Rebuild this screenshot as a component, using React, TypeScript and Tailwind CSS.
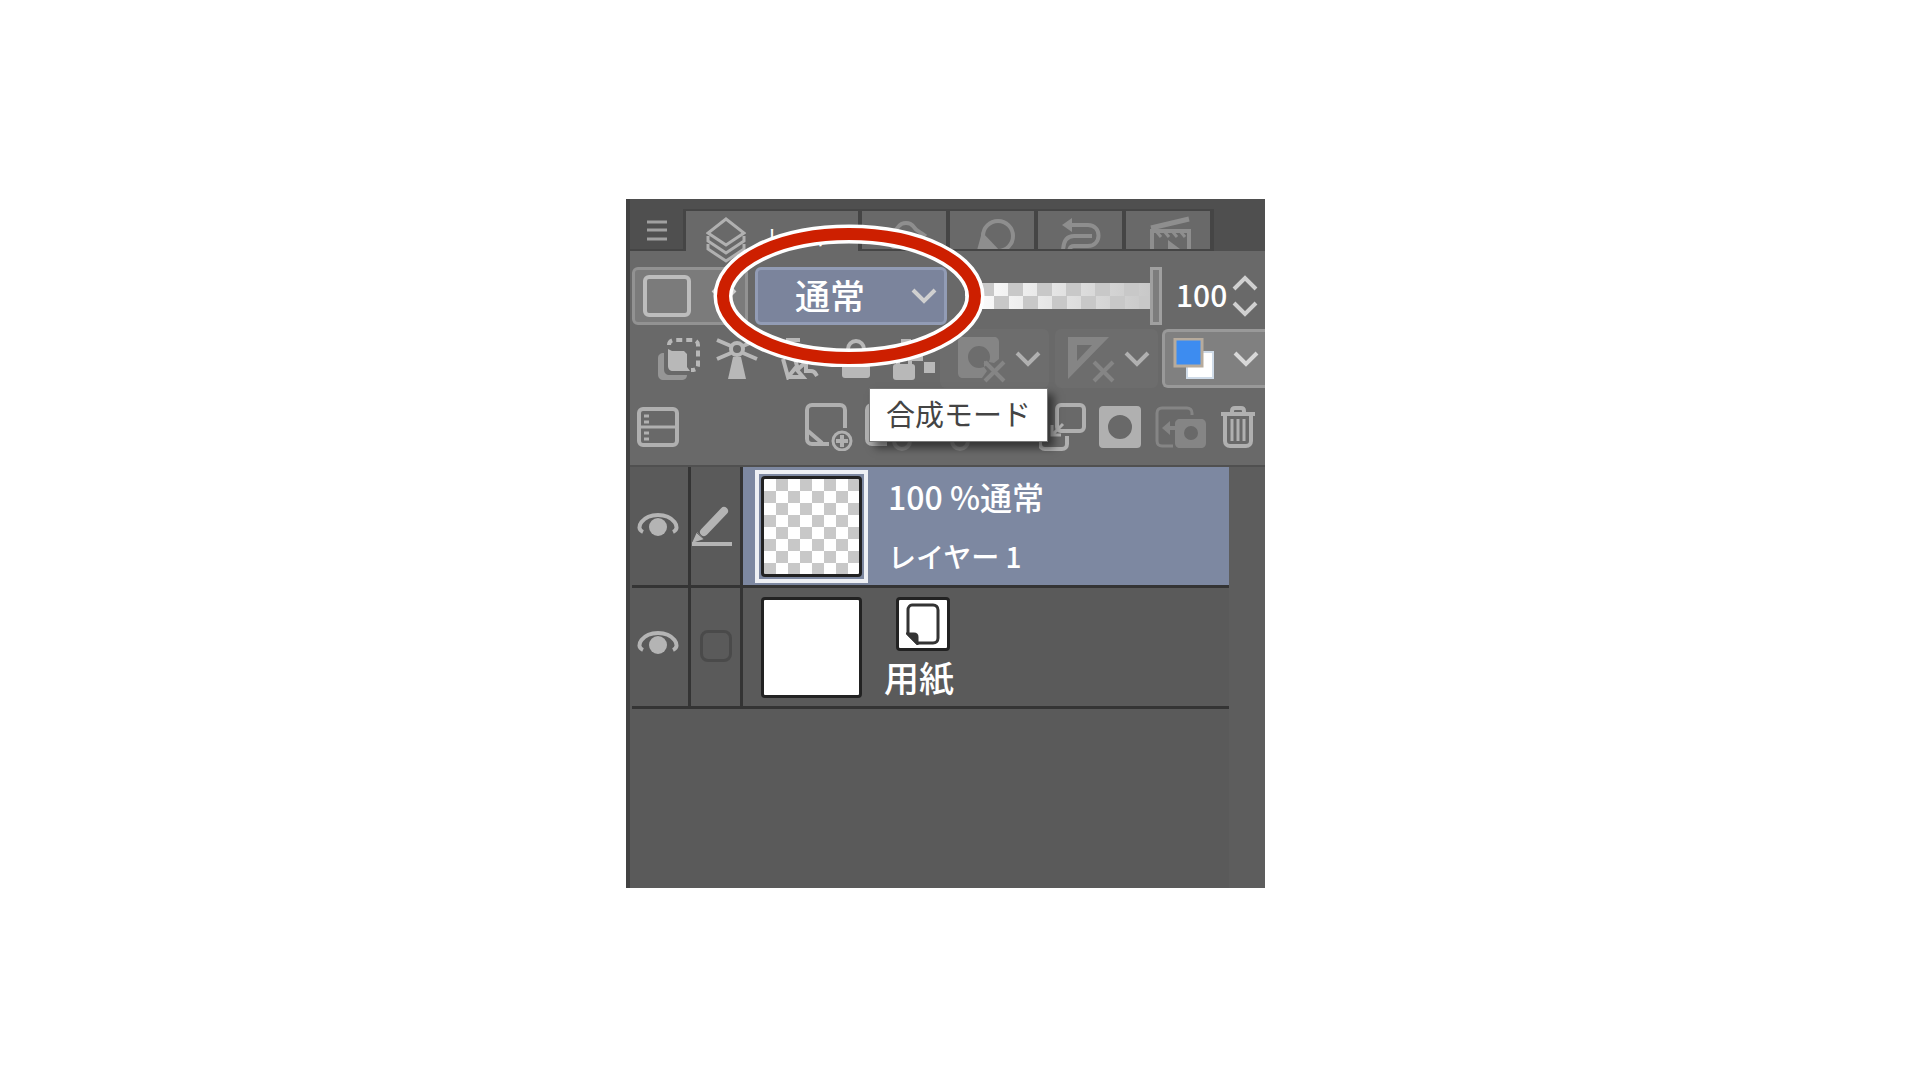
import { useState, type ReactNode } from "react";

const checker =
  "bg-[conic-gradient(#c8c8c8_25%,#fff_0_50%,#c8c8c8_0_75%,#fff_0)]";

function Chevron({ up = false }: { up?: boolean }) {
  return (
    <svg width="26" height="16" viewBox="0 0 26 16" fill="none" stroke="currentColor" strokeWidth="4" aria-hidden="true">
      <path d={up ? "M2 14 13 3l11 11" : "M2 2l11 11L24 2"} />
    </svg>
  );
}

function Icon({ w, h = 42, children }: { w: number; h?: number; children: ReactNode }) {
  return (
    <svg width={w} height={h} viewBox={`0 0 ${w} ${h}`} fill="none" stroke="currentColor" strokeWidth="4" className="block shrink-0" aria-hidden="true">
      {children}
    </svg>
  );
}

function Tab({ label, children }: { label: string; children: ReactNode }) {
  return (
    <button role="tab" aria-selected="false" aria-label={label} className="flex h-[42px] w-22 items-start justify-center overflow-hidden border-t-2 border-r-4 border-b-2 border-[#454545] bg-[#696969] pl-1 text-[#8e8e8e]">
      {children}
    </button>
  );
}

function Eye() {
  return (
    <svg width="42" height="26" viewBox="0 0 42 26" fill="none" aria-hidden="true">
      <path d="M6 20C-3 16 6 3 21 3s24 13 15 17" stroke="#b4b4b4" strokeWidth="4" />
      <circle cx="21" cy="15" r="9" fill="#b4b4b4" />
    </svg>
  );
}

function Tabs() {
  return (
    <div role="tablist" className="flex h-13 items-end bg-[#4f4f4f]">
      <button aria-label="メニュー" className="flex h-[42px] w-14 items-start justify-center border-r-3 border-b-2 border-[#454545] pt-2.5 text-[#a0a0a0]">
        <Icon w={22} h={24}>
          <path d="M1 3h20M1 11h20M1 20h20" strokeWidth="3" />
        </Icon>
      </button>
      <button role="tab" aria-selected="true" className="flex h-[42px] w-44 items-start border-t-2 border-r-4 border-[#454545] bg-[#696969] pt-1.5 pl-5 text-white">
        <span className="text-[#b0b0b0]">
          <Icon w={40} h={46}>
            <path d="M20 2 38 16 20 28 2 16zM2 19v5l18 12 18-12v-5M2 27v5l18 12 18-12v-5" strokeWidth="3" />
          </Icon>
        </span>
        <span className="ml-5 text-[22px] leading-9 whitespace-nowrap">レイヤー</span>
      </button>
      <Tab label="検索">
        <Icon w={42} h={46}>
          <path d="M3 24c4-3 8-4 11-9 3-4 11-4 14 0 3 5 7 6 11 9L21 38zM3 32l18 13 18-13" />
        </Icon>
      </Tab>
      <Tab label="プロパティ">
        <Icon w={42} h={46}>
          <circle cx="25" cy="25" r="15" />
          <path d="M9 21 30 43H3z" fill="currentColor" stroke="none" />
        </Icon>
      </Tab>
      <Tab label="ヒストリー">
        <Icon w={44} h={46}>
          <path d="M6 14h22c14 0 14 21 0 21H14c-4 0-5 3-5 7M32 25H14C7 25 3 30 3 41" />
          <path d="M12 7v14L2 14z" fill="currentColor" stroke="none" />
        </Icon>
      </Tab>
      <Tab label="オートアクション">
        <Icon w={44} h={46}>
          <path d="M3 17 41 8" strokeWidth="5" />
          <path d="M4 41V20h37v21" />
          <path d="m8 20 5 6m3-6 5 6m3-6 5 6m3-6 5 6" strokeWidth="3" />
          <path d="M20 29v14l12-5z" fill="currentColor" stroke="none" />
        </Icon>
      </Tab>
    </div>
  );
}

function BlendRow() {
  const [opacity, setOpacity] = useState(100);

  return (
    <div className="flex items-center pt-4 pr-[7px] pb-1 pl-0.5 text-[#d0d0d0]">
      <button aria-label="パレットカラー" className="mr-[7px] flex h-[58px] w-29 items-center justify-between rounded-md border-3 border-[#929292] bg-[#7b7b7b] pr-2 pl-2">
        <span className="h-[42px] w-12 rounded-md border-4 border-[#bdbdbd]" />
        <Chevron />
      </button>
      <div className="grid h-[58px] w-48 items-center">
        <select aria-label="合成モード" className="col-start-1 row-start-1 h-full w-full appearance-none rounded-md border-3 border-[#929cb5] bg-[#7b849c] pb-1 pl-[37px] text-[35px] leading-none font-medium text-white">
          <option>通常</option>
        </select>
        <span className="pointer-events-none col-start-1 row-start-1 mr-2.5 justify-self-end">
          <Chevron />
        </span>
      </div>
      <div className="ml-[18px] grid flex-1 items-center">
        <div className={`${checker} col-start-1 row-start-1 mr-3 h-[26px] bg-size-[29px_26px]`}>
          <div className="h-full bg-linear-to-r from-transparent to-[#c8c8c8]" />
        </div>
        <input
          type="range"
          aria-label="不透明度"
          value={opacity}
          onChange={(e) => setOpacity(Number(e.target.value))}
          className="col-start-1 row-start-1 h-[58px] w-full appearance-none bg-transparent [&::-webkit-slider-thumb]:h-[58px] [&::-webkit-slider-thumb]:w-3 [&::-webkit-slider-thumb]:appearance-none [&::-webkit-slider-thumb]:border-3 [&::-webkit-slider-thumb]:border-[#a0a0a0] [&::-webkit-slider-thumb]:bg-[#7d7d7d]"
        />
      </div>
      <input
        aria-label="不透明度の値"
        value={opacity}
        onChange={(e) => setOpacity(Number(e.target.value) || 0)}
        className="ml-3.5 w-14 bg-transparent pb-1 text-[30px] leading-none font-medium text-white"
      />
      <div className="flex flex-col gap-2.5">
        <button aria-label="増やす"><Chevron up /></button>
        <button aria-label="減らす"><Chevron /></button>
      </div>
    </div>
  );
}

function LockRow() {
  return (
    <div className="flex h-[59px] items-center text-[#b8b8b8]">
      <button aria-label="下のレイヤーでクリッピング" className="ml-7">
        <Icon w={42}>
          <path d="M6 15c-4 0-6 2-6 5v16c0 4 2 6 6 6h17c4 0 6-2 6-5H12c-4 0-6-2-6-6z" fill="#969696" stroke="none" />
          <path d="M10 11l4 2h12l3 3v13l3 4H15c-3 0-5-2-5-5z" fill="currentColor" stroke="none" />
          <path d="M11 7c0-3 2-5 5-5h19c3 0 5 2 5 5v20c0 3-2 5-7 5" strokeDasharray="6 4" />
        </Icon>
      </button>
      <button aria-label="参照レイヤーに設定" className="ml-4">
        <Icon w={42}>
          <path d="m1 2 14 6M1 21l14-6M41 2 27 8M41 21l-14-6" />
          <circle cx="21" cy="11" r="6" />
          <path d="M17 19h8l5 22H12z" fill="currentColor" stroke="none" />
        </Icon>
      </button>
      <button aria-label="下描きレイヤーに設定" className="ml-5">
        <Icon w={42}>
          <path d="M8 2h14M5 21l5 18 9-11-2-7M10 39h15l-6-7 9-8v9h5c4 0 4 2 6 5" />
        </Icon>
      </button>
      <button aria-label="レイヤーをロック" className="ml-5">
        <Icon w={32}>
          <path d="M8 20v-9a8 8 0 0 1 16 0v9" />
          <rect x="2" y="18" width="28" height="22" rx="3" fill="currentColor" stroke="none" />
        </Icon>
      </button>
      <button aria-label="透明ピクセルをロック" className="ml-5">
        <Icon w={44}>
          <path d="M9 1h10v10H9zM20 13h11v10H20zM32 24h11v11H32z" fill="currentColor" stroke="none" />
          <path d="M6 28v-6a6 6 0 0 1 12 0v6" />
          <rect x="1" y="26" width="22" height="16" rx="3" fill="currentColor" stroke="none" />
        </Icon>
      </button>
      <button aria-label="マスクを有効化" className="ml-1 flex h-full flex-1 items-center justify-between rounded-md bg-[#6d6d6d] pr-2 pl-[18px] text-[#858585]">
        <Icon w={48} h={48}>
          <path fillRule="evenodd" d="M5 2h31c3 0 5 2 5 5v17l-5 4-10-2v6l3 4-5 7H5c-3 0-5-2-5-5V7c0-3 2-5 5-5zM21 11a11 11 0 1 0 0 22 11 11 0 0 0 0-22z" fill="currentColor" stroke="none" />
          <path d="m27 27 19 19M46 27 27 46" />
        </Icon>
        <span className="text-[#b0b0b0]"><Chevron /></span>
      </button>
      <button aria-label="定規の表示範囲を設定" className="ml-1.5 flex h-full flex-1 items-center justify-between rounded-md bg-[#6d6d6d] pr-2 pl-3 text-[#858585]">
        <Icon w={48} h={48}>
          <path fillRule="evenodd" d="M1 2h41L1 44zM10 10v16l15-16z" fill="currentColor" stroke="none" />
          <path d="m27 27 19 19M46 27 27 46" />
        </Icon>
        <span className="text-[#b0b0b0]"><Chevron /></span>
      </button>
      <button aria-label="レイヤーカラーを変更" className="ml-1 flex h-full w-[103px] items-center justify-between rounded-l-md border-3 border-r-0 border-[#999] bg-[#808080] pr-1.5 pl-2">
        <Icon w={42}>
          <rect x="14" y="14" width="26" height="26" fill="#fff" stroke="#cfdbe8" strokeWidth="2" />
          <rect x="2" y="1" width="27" height="27" fill="#3d8cf0" stroke="#b7ab9c" strokeWidth="3" />
        </Icon>
        <span className="text-[#d8d8d8]"><Chevron /></span>
      </button>
    </div>
  );
}

function CommandRow() {
  return (
    <div className="flex h-[77px] items-center pr-[10px] pl-[7px] text-[#b0b0b0]">
      <button aria-label="レイヤーを2ペインで表示">
        <Icon w={42}>
          <rect x="2" y="3" width="38" height="36" rx="4" />
          <path d="M2 21h38M7 10h5M7 16h5M7 27h5M7 33h5" strokeWidth="3" />
        </Icon>
      </button>
      <div className="ml-auto flex items-center">
        <button aria-label="新規ラスターレイヤー">
          <Icon w={48} h={48}>
            <path d="M40 25V7c0-3-2-5-5-5H7C4 2 2 4 2 7v29c0 3 2 5 5 5h17M3 28l14 12" />
            <circle cx="37" cy="38" r="9" strokeWidth="3" />
            <path d="M37 32v12M31 38h12" />
          </Icon>
        </button>
        <button aria-label="新規ベクターレイヤー" className="ml-3">
          <Icon w={48} h={48}>
            <path d="M40 25V7c0-3-2-5-5-5H7C4 2 2 4 2 7v29c0 3 2 5 5 5h15" />
            <circle cx="37" cy="38" r="8" stroke="#828282" />
          </Icon>
        </button>
        <button aria-label="新規レイヤーフォルダー" className="ml-3.5 text-[#828282]">
          <Icon w={48} h={48}>
            <path d="M3 36V10h14l4 5h20v10M3 36h20" />
            <circle cx="33" cy="38" r="8" />
          </Icon>
        </button>
        <button aria-label="下のレイヤーに結合" className="ml-16">
          <Icon w={48} h={48}>
            <rect x="18" y="2" width="27" height="26" rx="4" />
            <path d="M28 33v8c0 3-2 5-5 5H6c-3 0-5-2-5-5V25" />
            <path d="M24 21 13 32M13 22v10h9" strokeWidth="3" />
          </Icon>
        </button>
        <button aria-label="レイヤーマスクを作成" className="ml-3">
          <Icon w={42}>
            <path fillRule="evenodd" d="M4 0h34c3 0 4 2 4 4v34c0 3-2 4-4 4H4c-3 0-4-2-4-4V4c0-3 2-4 4-4zM21 9a12 12 0 1 0 0 24 12 12 0 0 0 0-24z" fill="currentColor" stroke="none" />
          </Icon>
        </button>
        <button aria-label="マスクをレイヤーに適用" className="ml-3.5 text-[#858585]">
          <Icon w={51}>
            <path d="M37 9V7c0-3-2-5-5-5H7C4 2 2 4 2 7v28c0 3 2 5 5 5h11" strokeWidth="3" />
            <path d="M20 22H10" />
            <path d="M15 15v14l-8-7z" fill="currentColor" stroke="none" />
            <path fillRule="evenodd" d="M25 13h21c3 0 5 2 5 5v19c0 3-2 5-5 5H25c-3 0-5-2-5-5V18c0-3 2-5 5-5zM36 20a7 7 0 1 0 0 14 7 7 0 0 0 0-14z" fill="currentColor" stroke="none" />
          </Icon>
        </button>
        <button aria-label="レイヤーを削除" className="ml-[15px]">
          <Icon w={34}>
            <path d="M0 8h34M11 8V5c0-2 1-3 3-3h6c2 0 3 1 3 3v3M4 8v27c0 3 2 5 5 5h16c3 0 5-2 5-5V8" />
            <path d="M11 13v22M17 13v22M23 13v22" strokeWidth="3" />
          </Icon>
        </button>
      </div>
    </div>
  );
}

function LayerList() {
  return (
    <div className="flex flex-1 border-t-2 border-[#505050] bg-[#5a5a5a] pl-0.5">
      <ul className="flex-1">
        <li className="flex h-[121px] border-b-3 border-[#343434]">
          <button aria-label="レイヤー 1を表示" className="flex w-14 items-center justify-center pr-1 pb-0.5">
            <Eye />
          </button>
          <div className="flex w-[55px] items-center border-x-3 border-[#343434] text-[#b4b4b4]">
            <Icon w={42} h={40}>
              <path d="M1 38h40" />
              <path d="M6 26l7 7-12 4z" fill="currentColor" stroke="none" />
              <path d="m13 26 20-21" strokeWidth="8" strokeLinecap="round" />
              <path d="m5 26 9 8" stroke="#5a5a5a" strokeWidth="1" />
            </Icon>
          </div>
          <div className="flex flex-1 items-center bg-[#7d88a1] pl-3">
            <div className="border-4 border-[#eef0f4] p-0.5">
              <div className={`${checker} size-[101px] rounded-sm border-3 border-[#222] bg-size-[24px_24px] bg-origin-content`} />
            </div>
            <div className="ml-5 flex flex-col gap-7 font-medium text-white">
              <span className="text-[32px] leading-8">100 %通常</span>
              <span className="text-[28px] leading-8">レイヤー 1</span>
            </div>
          </div>
        </li>
        <li className="flex h-[121px] border-b-3 border-[#343434]">
          <button aria-label="用紙を表示" className="flex w-14 items-center justify-center pr-1 pb-2">
            <Eye />
          </button>
          <div className="flex w-[55px] items-center justify-center border-x-3 border-[#343434] pb-0.5">
            <input type="checkbox" aria-label="用紙を選択" className="h-8 w-8 appearance-none rounded-lg border-3 border-[#4a4a4a]" />
          </div>
          <div className="flex flex-1 items-center pl-[18px]">
            <div className="size-[101px] rounded-sm border-3 border-[#222] bg-white" />
            <div className="ml-[22px] flex flex-col gap-2 pb-0.5 text-white">
              <div className="ml-3 flex size-[54px] items-center justify-center rounded-sm border-3 border-[#222] bg-white text-[#333]">
                <Icon w={34} h={42}>
                  <path d="M6 2h21c3 0 5 2 5 5v28c0 3-2 5-5 5H11l-9-9V7c0-3 2-5 4-5z" strokeWidth="3" />
                  <path d="M2 31h6c2 0 3 1 3 3v6z" fill="currentColor" strokeWidth="3" />
                </Icon>
              </div>
              <span className="text-[35px] leading-9 font-medium">用紙</span>
            </div>
          </div>
        </li>
      </ul>
      <div className="w-9 bg-[#5d5d5d]" />
    </div>
  );
}

export default function App() {
  return (
    <main className="grid min-h-screen grid-cols-[626fr_639fr_655fr] bg-white pt-[199px] pb-48 font-['Noto_Sans_CJK_JP',sans-serif]">
      <section aria-label="レイヤーパレット" className="relative col-start-2 flex flex-col border-l-4 border-[#424242] bg-[#696969]">
        <Tabs />
        <BlendRow />
        <LockRow />
        <CommandRow />
        <LayerList />

        <div role="tooltip" className="absolute top-[189px] left-[239px] border border-[#777] bg-white px-4 pt-1.5 pb-2.5 text-[29px] leading-9 whitespace-nowrap text-[#444] shadow-[6px_6px_8px_rgba(0,0,0,0.5)]">
          合成モード
        </div>

        {/* highlight ring around the blend mode list */}
        <svg width="272" height="143" viewBox="0 0 272 143" fill="none" className="pointer-events-none absolute top-[25px] left-[83px]" aria-hidden="true">
          <ellipse cx="136" cy="72" rx="126" ry="62" stroke="#fff" strokeWidth="19" />
          <ellipse cx="136" cy="72" rx="126" ry="62" stroke="#cd1f00" strokeWidth="12" />
        </svg>
      </section>
    </main>
  );
}
